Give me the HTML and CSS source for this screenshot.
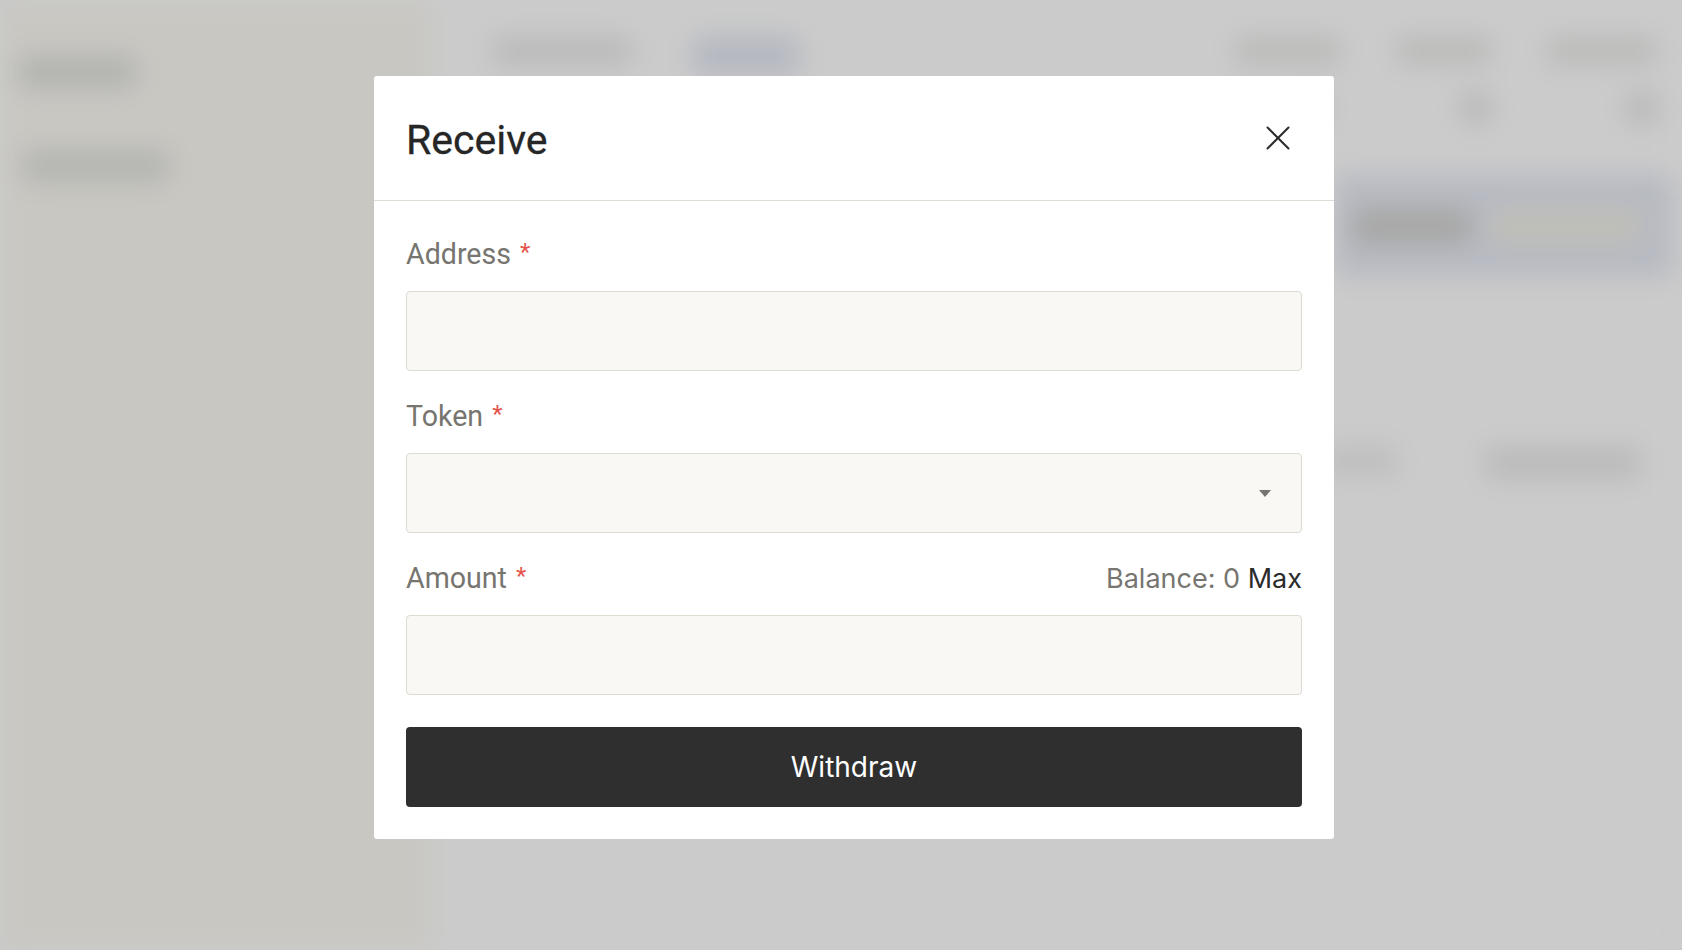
FILE: index.html
```html
<!DOCTYPE html>
<html lang="en">
<head>
<meta charset="utf-8">
<title>Receive</title>
<link rel="stylesheet" href="styles.css">
</head>
<body>
<div class="app" aria-hidden="true">
  <aside class="sidebar">
    <div class="blob logo"></div>
    <div class="blob navitem"></div>
  </aside>
  <div class="main">
    <div class="topbar">
      <div class="tabs">
        <span class="blob tab"></span>
        <span class="blob tab tab-active"></span>
      </div>
      <div class="actions">
        <span class="blob act"></span>
        <span class="blob act act-b"></span>
        <span class="blob act act-c"></span>
      </div>
    </div>
    <div class="subbar">
      <span class="blob dot"></span>
      <span class="blob dot"></span>
      <span class="blob dot"></span>
    </div>
    <div class="card-row">
      <div class="bgcard">
        <span class="blob dark"></span>
        <span class="blob light"></span>
      </div>
    </div>
    <div class="filter-row">
      <span class="blob f1"></span>
      <span class="blob f2"></span>
    </div>
  </div>
</div>

<div class="backdrop">
  <div class="modal" role="dialog" aria-labelledby="modal-title">
    <div class="modal-header">
      <h2 id="modal-title" class="modal-title">Receive</h2>
      <button class="close-btn" aria-label="Close">
        <svg width="24" height="24" viewBox="0 0 24 24" fill="none" stroke="#2b2b2b" stroke-width="2" stroke-linecap="round"><path d="M1.5 1.5 L22.5 22.5 M22.5 1.5 L1.5 22.5"/></svg>
      </button>
    </div>
    <form class="modal-body">
      <div class="field">
        <label class="field-label"><span>Address<span class="req">*</span></span></label>
        <input class="input" type="text">
      </div>
      <div class="field">
        <label class="field-label"><span>Token<span class="req">*</span></span></label>
        <div class="input select">
          <svg class="caret" width="12" height="7" viewBox="0 0 12 7"><path d="M0 0 H12 L6 7 Z" fill="#76746f"/></svg>
        </div>
      </div>
      <div class="field">
        <label class="field-label"><span>Amount<span class="req">*</span></span><span class="balance">Balance: 0 <span class="max">Max</span></span></label>
        <input class="input" type="text">
      </div>
      <button type="button" class="submit">Withdraw</button>
    </form>
  </div>
</div>
</body>
</html>
```

FILE: styles.css
```css
* { box-sizing: border-box; }
html, body { margin: 0; padding: 0; }
body {
  width: 1682px;
  height: 950px;
  overflow: hidden;
  background: #cbcbcb;
  font-family: Roboto, "Liberation Sans", sans-serif;
}

/* blurred page behind */
.app {
  display: flex;
  width: 1682px;
  height: 950px;
  filter: blur(13px);
  background: #cbcbcb;
}
.blob { display: block; border-radius: 10px; }
.sidebar {
  width: 430px;
  background: #c8c7c2;
  display: flex;
  flex-direction: column;
  padding: 56px 0 0 18px;
  gap: 62px;
}
.logo { width: 118px; height: 32px; background: #b2b2af; }
.navitem { width: 148px; height: 32px; background: #b4b4b0; margin-left: 4px; }
.main { flex: 1; display: flex; flex-direction: column; }
.topbar {
  display: flex;
  justify-content: space-between;
  padding: 36px 24px 0 62px;
}
.tabs { display: flex; gap: 60px; }
.tab { width: 140px; height: 30px; background: #bababa; }
.tab-active { width: 108px; height: 40px; background: #b5b8c1; }
.actions { display: flex; gap: 54px; }
.act { width: 108px; height: 30px; background: #bbbbba; }
.act-b { width: 96px; }
.act-c { width: 112px; }
.subbar { display: flex; justify-content: flex-end; gap: 130px; padding: 14px 22px 0 0; }
.dot { width: 36px; height: 36px; border-radius: 50%; background: #b9b9b9; }
.card-row { display: flex; justify-content: flex-end; padding: 48px 8px 0 0; }
.bgcard {
  width: 340px;
  height: 104px;
  background: #b8bac2;
  border-radius: 12px;
  display: flex;
  align-items: center;
  gap: 18px;
  padding: 0 18px;
}
.dark { width: 120px; height: 34px; background: #a6a6a4; }
.light { width: 150px; height: 30px; background: #c0c0b6; }
.filter-row { display: flex; justify-content: flex-end; gap: 86px; padding: 168px 40px 0 0; }
.f1 { width: 74px; height: 30px; background: #bebebe; }
.f2 { width: 158px; height: 34px; background: #bbbbbb; }

/* modal overlay */
.backdrop {
  position: fixed;
  inset: 0;
  display: flex;
  justify-content: center;
  align-items: flex-start;
  padding: 76px 0 0 26px;
}
.modal {
  width: 960px;
  background: #ffffff;
  border-radius: 3px;
}
.modal-header {
  height: 125px;
  display: flex;
  align-items: center;
  justify-content: space-between;
  padding: 0 32px;
  border-bottom: 1px solid #dedcd5;
}
.modal-title {
  margin: 0;
  font-family: Roboto, "Liberation Sans", sans-serif;
  font-weight: 400;
  font-size: 41px;
  color: #262626;
  line-height: 48px;
  padding-top: 4px;
  -webkit-text-stroke: 0.3px #262626;
}
.close-btn {
  width: 48px;
  height: 48px;
  border: 0;
  background: transparent;
  padding: 0;
  display: flex;
  align-items: center;
  justify-content: center;
  margin-top: 0;
}
.modal-body {
  margin: 0;
  padding: 32px;
  display: flex;
  flex-direction: column;
  gap: 24px;
}
.field { display: flex; flex-direction: column; gap: 16px; }
.field-label {
  display: flex;
  justify-content: space-between;
  align-items: center;
  height: 42px;
  font-size: 28.6px;
  color: #77756f;
  font-family: Roboto, "Liberation Sans", sans-serif;
}
.req { color: #e5534b; font-size: 24px; margin-left: 9px; vertical-align: 4px; }
.balance { font-family: Inter, "Noto Sans", sans-serif; color: #77756f; font-size: 27px; }
.max { color: #2b2b2b; }
.input {
  display: block;
  width: 100%;
  height: 80px;
  margin: 0;
  background: #f9f8f5;
  border: 1px solid #dedbd3;
  border-radius: 4px;
  font-size: 28px;
  outline: none;
}
.select {
  display: flex;
  align-items: center;
  justify-content: flex-end;
  padding-right: 30px;
}
.submit {
  margin-top: 8px;
  height: 80px;
  width: 100%;
  border: 0;
  border-radius: 4px;
  background: #2f2f2f;
  color: #ffffff;
  font-family: Inter, "Noto Sans", sans-serif;
  font-size: 28px;
}
```
